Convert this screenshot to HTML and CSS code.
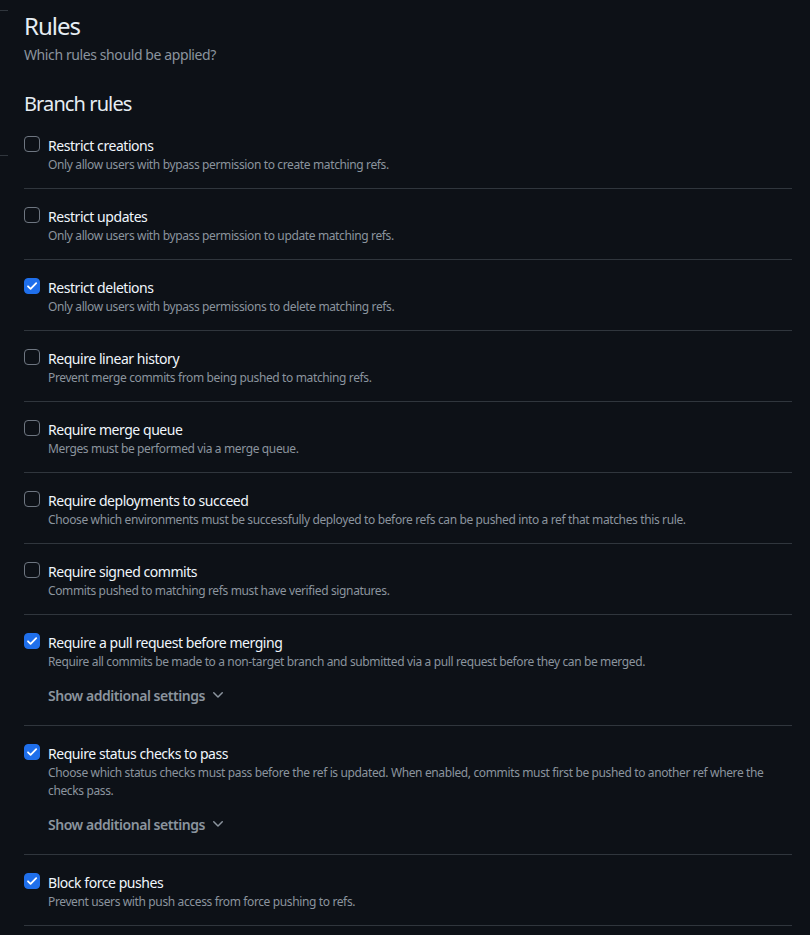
FILE: index.html
```html
<!DOCTYPE html>
<html lang="en">
<head>
<meta charset="utf-8">
<title>Rules</title>
<link rel="stylesheet" href="styles.css">
</head>
<body>
<div class="edge edge-top"></div>
<div class="edge edge-mid"></div>
<main class="page">
  <header class="head">
    <h1 class="title">Rules</h1>
    <p class="subtitle">Which rules should be applied?</p>
  </header>
  <h2 class="section">Branch rules</h2>
  <ul class="rules">
    <li class="rule">
      <span class="box"></span>
      <div class="body">
        <div class="name">Restrict creations</div>
        <div class="desc">Only allow users with bypass permission to create matching refs.</div>
      </div>
    </li>
    <li class="rule">
      <span class="box"></span>
      <div class="body">
        <div class="name">Restrict updates</div>
        <div class="desc">Only allow users with bypass permission to update matching refs.</div>
      </div>
    </li>
    <li class="rule">
      <span class="box checked"><svg viewBox="0 0 16 16" width="16" height="16"><path d="M4 8.3l2.6 2.6L12.2 5.2" /></svg></span>
      <div class="body">
        <div class="name">Restrict deletions</div>
        <div class="desc">Only allow users with bypass permissions to delete matching refs.</div>
      </div>
    </li>
    <li class="rule">
      <span class="box"></span>
      <div class="body">
        <div class="name">Require linear history</div>
        <div class="desc">Prevent merge commits from being pushed to matching refs.</div>
      </div>
    </li>
    <li class="rule">
      <span class="box"></span>
      <div class="body">
        <div class="name">Require merge queue</div>
        <div class="desc">Merges must be performed via a merge queue.</div>
      </div>
    </li>
    <li class="rule">
      <span class="box"></span>
      <div class="body">
        <div class="name">Require deployments to succeed</div>
        <div class="desc">Choose which environments must be successfully deployed to before refs can be pushed into a ref that matches this rule.</div>
      </div>
    </li>
    <li class="rule">
      <span class="box"></span>
      <div class="body">
        <div class="name">Require signed commits</div>
        <div class="desc">Commits pushed to matching refs must have verified signatures.</div>
      </div>
    </li>
    <li class="rule">
      <span class="box checked"><svg viewBox="0 0 16 16" width="16" height="16"><path d="M4 8.3l2.6 2.6L12.2 5.2" /></svg></span>
      <div class="body">
        <div class="name">Require a pull request before merging</div>
        <div class="desc">Require all commits be made to a non-target branch and submitted via a pull request before they can be merged.</div>
        <button class="more" type="button">Show additional settings <svg viewBox="0 0 16 16" width="16" height="16"><path d="M12.78 5.22a.749.749 0 0 1 0 1.06l-4.25 4.25a.749.749 0 0 1-1.06 0L3.22 6.28a.749.749 0 1 1 1.06-1.06L8 8.940l3.72-3.720a.749.749 0 0 1 1.060 0Z"/></svg></button>
      </div>
    </li>
    <li class="rule">
      <span class="box checked"><svg viewBox="0 0 16 16" width="16" height="16"><path d="M4 8.3l2.6 2.6L12.2 5.2" /></svg></span>
      <div class="body">
        <div class="name">Require status checks to pass</div>
        <div class="desc">Choose which status checks must pass before the ref is updated. When enabled, commits must first be pushed to another ref where the checks pass.</div>
        <button class="more" type="button">Show additional settings <svg viewBox="0 0 16 16" width="16" height="16"><path d="M12.78 5.22a.749.749 0 0 1 0 1.06l-4.25 4.25a.749.749 0 0 1-1.06 0L3.22 6.28a.749.749 0 1 1 1.06-1.06L8 8.940l3.72-3.720a.749.749 0 0 1 1.060 0Z"/></svg></button>
      </div>
    </li>
    <li class="rule">
      <span class="box checked"><svg viewBox="0 0 16 16" width="16" height="16"><path d="M4 8.3l2.6 2.6L12.2 5.2" /></svg></span>
      <div class="body">
        <div class="name">Block force pushes</div>
        <div class="desc">Prevent users with push access from force pushing to refs.</div>
      </div>
    </li>
  </ul>
</main>
</body>
</html>
```

FILE: styles.css
```css
* { box-sizing: border-box; }
html, body {
  margin: 0;
  padding: 0;
  background: #0d1117;
  color: #e6edf3;
  font-family: "Segoe UI", "Noto Sans", "Open Sans", sans-serif;
  overflow: hidden;
  height: 935px;
}
.edge {
  position: absolute;
  left: 0;
  width: 8px;
  height: 1px;
  background: #30363d;
}
.edge-top { top: 10px; }
.edge-mid { top: 155px; }

.page {
  padding: 11px 18px 0 24px;
}
.title {
  margin: 0;
  font-size: 24px;
  font-weight: 400;
  line-height: 30px;
  letter-spacing: -1px;
}
.subtitle {
  margin: 4px 0 0;
  font-size: 14px;
  line-height: 20px;
  color: #8b949e;
  letter-spacing: -0.4px;
}
.section {
  margin: 25px 0 0;
  font-size: 20px;
  font-weight: 400;
  line-height: 28px;
  letter-spacing: -0.9px;
}
.rules {
  list-style: none;
  margin: 0;
  padding: 0;
}
.rule {
  display: flex;
  gap: 8px;
  padding: 18px 0 14px;
  border-bottom: 1px solid #30363d;
}
.box {
  flex: none;
  width: 16px;
  height: 16px;
  margin-top: 0;
  border: 1px solid #6e7681;
  border-radius: 4px;
  display: flex;
}
.box.checked {
  background: #1f6feb;
  border-color: #1f6feb;
}
.box svg {
  margin: -1px;
  fill: none;
  stroke: #ffffff;
  stroke-width: 1.8;
  stroke-linecap: round;
  stroke-linejoin: round;
}
.body { flex: 1; min-width: 0; }
.name {
  font-size: 14px;
  line-height: 20px;
  color: #f0f6fc;
  letter-spacing: -0.45px;
}
.desc {
  font-size: 12px;
  line-height: 18px;
  color: #8b949e;
  letter-spacing: -0.37px;
  max-width: 730px;
}
.more {
  display: flex;
  align-items: center;
  gap: 5px;
  height: 32px;
  margin-top: 8px;
  padding: 0;
  background: none;
  border: 0;
  font-family: inherit;
  font-size: 14px;
  font-weight: 600;
  color: #8b949e;
  letter-spacing: -0.46px;
}
.more svg { fill: #8b949e; }
```
